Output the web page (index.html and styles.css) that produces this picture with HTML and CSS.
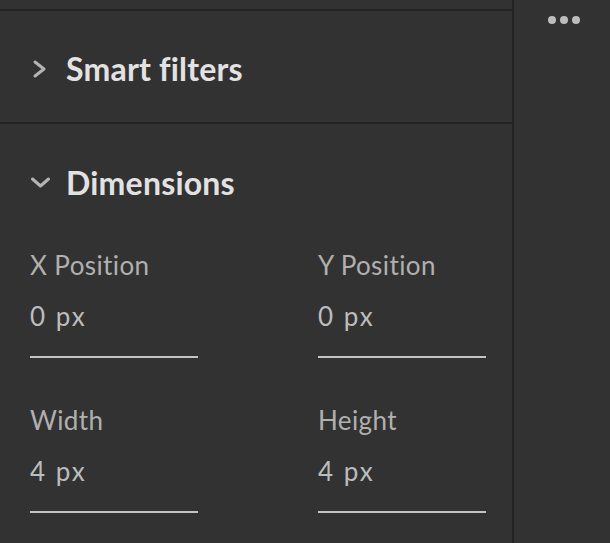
FILE: index.html
```html
<!DOCTYPE html>
<html>
<head>
<meta charset="utf-8">
<link rel="stylesheet" href="styles.css">
</head>
<body>
<div class="app">
  <div class="panel">
    <div class="panel-top"></div>
    <section class="section section-collapsed">
      <div class="section-header">
        <span class="chevron">
          <svg width="20" height="20" viewBox="0 0 20 20"><path d="M5 3 L14 10 L5 17" fill="none" stroke="#b4b4b4" stroke-width="3" stroke-linecap="round" stroke-linejoin="round"/></svg>
        </span>
        <span class="section-title">Smart filters</span>
      </div>
    </section>
    <section class="section section-open">
      <div class="section-header">
        <span class="chevron">
          <svg width="20" height="20" viewBox="0 0 20 20"><path d="M2.5 6 L10.5 13 L18.5 6" fill="none" stroke="#b4b4b4" stroke-width="3" stroke-linecap="round" stroke-linejoin="round"/></svg>
        </span>
        <span class="section-title">Dimensions</span>
      </div>
      <div class="fields">
        <div class="field">
          <div class="field-label">X Position</div>
          <div class="field-value">0 px</div>
        </div>
        <div class="field">
          <div class="field-label">Y Position</div>
          <div class="field-value">0 px</div>
        </div>
        <div class="field">
          <div class="field-label">Width</div>
          <div class="field-value">4 px</div>
        </div>
        <div class="field">
          <div class="field-label">Height</div>
          <div class="field-value">4 px</div>
        </div>
      </div>
    </section>
  </div>
  <div class="rail">
    <div class="more">
      <span class="dot"></span><span class="dot"></span><span class="dot"></span>
    </div>
  </div>
</div>
</body>
</html>
```

FILE: styles.css
```css
html, body {
  margin: 0;
  padding: 0;
  background: #323232;
}
body {
  font-family: "Lato", "Noto Sans", sans-serif;
  width: 610px;
  height: 543px;
  overflow: hidden;
}
.app {
  display: flex;
  height: 543px;
}
.panel {
  width: 512px;
  border-right: 2px solid #232323;
  display: flex;
  flex-direction: column;
}
.panel-top {
  height: 9px;
  border-bottom: 2px solid #232323;
}
.section-collapsed {
  height: 113px;
  border-bottom: 2px solid #232323;
  box-sizing: border-box;
  padding-top: 42px;
}
.section-open {
  padding-top: 43px;
}
.section-header {
  display: flex;
  align-items: center;
  height: 32px;
  padding-left: 30px;
}
.chevron {
  width: 20px;
  height: 20px;
  display: flex;
  margin-right: 16px;
}
.section-title {
  font-size: 32px;
  line-height: 32px;
  font-weight: 700;
  color: #e2e2e2;
  letter-spacing: 0.2px;
}
.fields {
  display: grid;
  grid-template-columns: 168px 168px;
  column-gap: 120px;
  row-gap: 47px;
  padding: 51px 0 0 30px;
}
.field {
  display: flex;
  flex-direction: column;
  border-bottom: 2px solid #c4c4c4;
  padding-bottom: 25px;
}
.field-label {
  font-size: 26px;
  line-height: 30px;
  color: #b0b0b0;
  letter-spacing: 0.4px;
}
.field-value {
  margin-top: 21px;
  font-size: 26px;
  line-height: 30px;
  color: #bcbcbc;
  letter-spacing: 2px;
}
.rail {
  flex: 1;
  display: flex;
  justify-content: center;
}
.more {
  display: flex;
  gap: 4px;
  padding-top: 16px;
  height: 8px;
  margin-left: 4px;
}
.dot {
  width: 8px;
  height: 8px;
  border-radius: 50%;
  background: #bdbdbd;
}
```
